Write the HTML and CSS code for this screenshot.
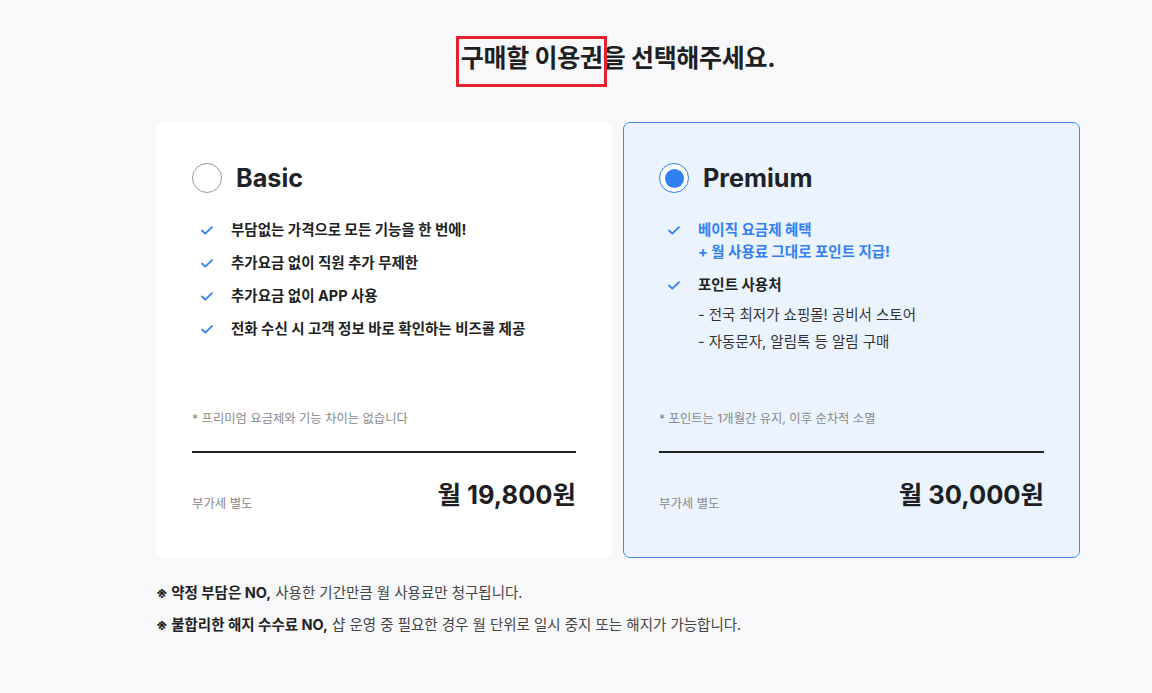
FILE: index.html
```html
<!DOCTYPE html>
<html lang="ko">
<head>
<meta charset="utf-8">
<title>이용권 선택</title>
<link rel="stylesheet" href="styles.css">
</head>
<body>
<main class="page">
  <h1 class="title"><span class="mark">구매할 이용권</span>을 선택해주세요.</h1>
  <div class="plans">
    <section class="card">
      <div class="card-head">
        <span class="radio"></span>
        <h2 class="plan-name">Basic</h2>
      </div>
      <ul class="features">
        <li><svg class="check" viewBox="0 0 12 9"><path d="M1 4.5 L4.3 7.6 L11 1.2" fill="none" stroke="currentColor" stroke-width="1.8" stroke-linecap="round" stroke-linejoin="round"/></svg><span>부담없는 가격으로 모든 기능을 한 번에!</span></li>
        <li><svg class="check" viewBox="0 0 12 9"><path d="M1 4.5 L4.3 7.6 L11 1.2" fill="none" stroke="currentColor" stroke-width="1.8" stroke-linecap="round" stroke-linejoin="round"/></svg><span>추가요금 없이 직원 추가 무제한</span></li>
        <li><svg class="check" viewBox="0 0 12 9"><path d="M1 4.5 L4.3 7.6 L11 1.2" fill="none" stroke="currentColor" stroke-width="1.8" stroke-linecap="round" stroke-linejoin="round"/></svg><span>추가요금 없이 APP 사용</span></li>
        <li><svg class="check" viewBox="0 0 12 9"><path d="M1 4.5 L4.3 7.6 L11 1.2" fill="none" stroke="currentColor" stroke-width="1.8" stroke-linecap="round" stroke-linejoin="round"/></svg><span>전화 수신 시 고객 정보 바로 확인하는 비즈콜 제공</span></li>
      </ul>
      <div class="card-foot">
        <p class="foot-note">* 프리미엄 요금제와 기능 차이는 없습니다</p>
        <div class="price-row">
          <span class="vat">부가세 별도</span>
          <strong class="price">월 19,800원</strong>
        </div>
      </div>
    </section>
    <section class="card selected">
      <div class="card-head">
        <span class="radio on"></span>
        <h2 class="plan-name">Premium</h2>
      </div>
      <ul class="features">
        <li class="blue"><svg class="check" viewBox="0 0 12 9"><path d="M1 4.5 L4.3 7.6 L11 1.2" fill="none" stroke="currentColor" stroke-width="1.8" stroke-linecap="round" stroke-linejoin="round"/></svg><span>베이직 요금제 혜택<br>+ 월 사용료 그대로 포인트 지급!</span></li>
        <li><svg class="check" viewBox="0 0 12 9"><path d="M1 4.5 L4.3 7.6 L11 1.2" fill="none" stroke="currentColor" stroke-width="1.8" stroke-linecap="round" stroke-linejoin="round"/></svg>
          <div>
            <span>포인트 사용처</span>
            <ul class="sub">
              <li>- 전국 최저가 쇼핑몰! 공비서 스토어</li>
              <li>- 자동문자, 알림톡 등 알림 구매</li>
            </ul>
          </div>
        </li>
      </ul>
      <div class="card-foot">
        <p class="foot-note">* 포인트는 1개월간 유지, 이후 순차적 소멸</p>
        <div class="price-row">
          <span class="vat">부가세 별도</span>
          <strong class="price">월 30,000원</strong>
        </div>
      </div>
    </section>
  </div>
  <ul class="notes">
    <li><b>※ 약정 부담은 NO,</b> 사용한 기간만큼 월 사용료만 청구됩니다.</li>
    <li><b>※ 불합리한 해지 수수료 NO,</b> 샵 운영 중 필요한 경우 월 단위로 일시 중지 또는 해지가 가능합니다.</li>
  </ul>
</main>
</body>
</html>
```

FILE: styles.css
```css
* { box-sizing: border-box; }
html, body { margin: 0; padding: 0; }
body {
  background: #f8f8fa;
  font-family: Inter, "Noto Sans CJK KR", sans-serif;
  color: #222;
}
.page {
  width: 924px;
  margin-left: 156px;
  padding-top: 40px;
}
.title {
  margin: 0 0 46px;
  text-align: center;
  font-size: 25px;
  line-height: 36px;
  font-weight: 700;
  color: #1d1f22;
  letter-spacing: -0.3px;
}
.mark { position: relative; }
.mark::after {
  content: "";
  position: absolute;
  left: -5px; right: -4px; top: -7px; bottom: -14px;
  border: 3px solid #e3222b;
}
.plans {
  display: flex;
  gap: 11px;
}
.card {
  flex: none;
  width: 456px;
  height: 436px;
  background: #fff;
  border: 1px solid #fff;
  border-radius: 7px;
  padding: 39px 35px 46px;
  display: flex;
  flex-direction: column;
}
.card.selected {
  width: 457px;
  background: #ebf3fe;
  border-color: #3d8bf0;
}
.card-head {
  display: flex;
  align-items: center;
  height: 32px;
  gap: 14px;
}
.radio {
  width: 30px;
  height: 30px;
  border-radius: 50%;
  border: 1px solid #9b9b9b;
  background: #fff;
  display: flex;
  align-items: center;
  justify-content: center;
}
.radio.on {
  border: 1.5px solid #2f80f0;
  background: #fff;
}
.radio.on::after {
  content: "";
  width: 19px;
  height: 19px;
  border-radius: 50%;
  background: #2f80f0;
}
.plan-name {
  margin: 0;
  font-size: 25.2px;
  line-height: 32px;
  font-weight: 700;
  color: #1f2228;
}
.features {
  list-style: none;
  margin: 25px 0 0;
  padding: 0 0 0 9px;
  display: flex;
  flex-direction: column;
  gap: 11px;
}
.features > li {
  display: flex;
  align-items: flex-start;
  gap: 18px;
  font-size: 14.5px;
  line-height: 22px;
  font-weight: 700;
  color: #222;
}
.features > li.blue { color: #2f80f0; }
.check {
  width: 12px;
  height: 9px;
  margin-top: 7px;
  flex: none;
  color: #2f80f0;
}
.sub {
  list-style: none;
  margin: 5px 0 0;
  padding: 0;
}
.sub li {
  font-size: 14.5px;
  line-height: 27px;
  font-weight: 400;
  color: #333;
}
.card-foot {
  margin-top: auto;
}
.foot-note {
  margin: 0;
  font-size: 12.3px;
  line-height: 18px;
  color: #888;
  padding-bottom: 23px;
  border-bottom: 2px solid #222;
}
.price-row {
  display: flex;
  justify-content: space-between;
  align-items: flex-end;
  margin-top: 26px;
}
.vat {
  font-size: 12.4px;
  line-height: 18px;
  margin-bottom: -2px;
  color: #888;
}
.price {
  font-size: 25.5px;
  line-height: 32px;
  font-weight: 700;
  color: #1d1f22;
}
.notes {
  list-style: none;
  margin: 25px 0 0;
  padding: 0;
  display: flex;
  flex-direction: column;
  gap: 12px;
}
.notes li {
  font-size: 14.5px;
  line-height: 20px;
  color: #444;
}
.notes b { color: #222; font-weight: 700; }
```
